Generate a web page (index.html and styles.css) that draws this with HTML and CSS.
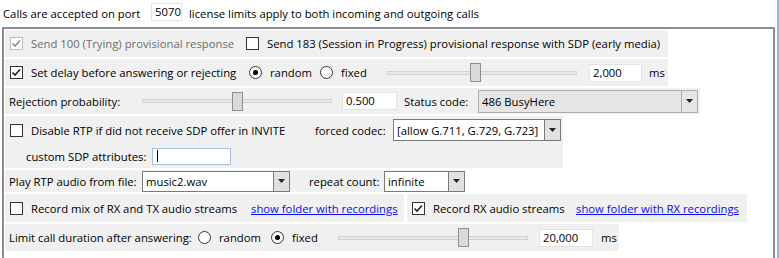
FILE: index.html
```html
<!DOCTYPE html>
<html>
<head>
<meta charset="utf-8">
<link rel="stylesheet" href="styles.css">
</head>
<body>
<div class="page">
  <div class="top">
    <span class="t-lbl1">Calls are accepted on port</span>
    <span class="portbox">5070</span>
    <span class="t-lbl2">license limits apply to both incoming and outgoing calls</span>
  </div>
  <div class="frame">
    <div class="row r1">
      <span class="cb disabled"><svg width="13" height="13" viewBox="0 0 13 13"><path d="M2.5 6.5 L5 9 L10 3.5" fill="none" stroke="#8c8c8c" stroke-width="1.6"/></svg></span>
      <span class="lbl muted w215">Send 100 (Trying) provisional response</span>
      <span class="cb nomargin"></span>
      <span class="lbl">Send 183 (Session in Progress) provisional response with SDP (early media)</span>
    </div>
    <div class="row r2">
      <span class="cb"><svg width="13" height="13" viewBox="0 0 13 13"><path d="M2.5 6.5 L5 9 L10 3.5" fill="none" stroke="#222" stroke-width="1.6"/></svg></span>
      <span class="lbl w218">Set delay before answering or rejecting</span>
      <span class="radio on"></span>
      <span class="lbl w50">random</span>
      <span class="radio"></span>
      <span class="lbl w46">fixed</span>
      <span class="slider"><span class="track"></span><span class="thumb" style="left:83px"></span></span>
      <span class="num ml12 w53">2,000</span>
      <span class="lbl ml7">ms</span>
    </div>
    <div class="row r3">
      <span class="lbl ml4 w133">Rejection probability:</span>
      <span class="slider"><span class="track"></span><span class="thumb" style="left:90px"></span></span>
      <span class="num ml10 w55">0.500</span>
      <span class="lbl ml7 w74">Status code:</span>
      <span class="dropdown w220"><span class="dd-text">486 BusyHere</span><span class="dd-btn"><svg width="7" height="4" viewBox="0 0 7 4"><path d="M0 0 H7 L3.5 4 Z" fill="#222"/></svg></span></span>
    </div>
    <div class="row r4">
      <div class="line l1">
        <span class="cb"></span>
        <span class="lbl w284">Disable RTP if did not receive SDP offer in INVITE</span>
        <span class="lbl w78">forced codec:</span>
        <span class="combo w168"><span class="cmb-text">[allow G.711, G.729, G.723]</span><span class="cmb-btn"><svg width="7" height="4" viewBox="0 0 7 4"><path d="M0 0 H7 L3.5 4 Z" fill="#222"/></svg></span></span>
      </div>
      <div class="line l2">
        <span class="lbl ml21 w126">custom SDP attributes:</span>
        <span class="textin"><span class="caret"></span></span>
      </div>
    </div>
    <div class="row r5">
      <span class="lbl ml4 w133">Play RTP audio from file:</span>
      <span class="combo w148"><span class="cmb-text">music2.wav</span><span class="cmb-btn"><svg width="7" height="4" viewBox="0 0 7 4"><path d="M0 0 H7 L3.5 4 Z" fill="#222"/></svg></span></span>
      <span class="lbl ml19 w75">repeat count:</span>
      <span class="combo w81"><span class="cmb-text">infinite</span><span class="cmb-btn"><svg width="7" height="4" viewBox="0 0 7 4"><path d="M0 0 H7 L3.5 4 Z" fill="#222"/></svg></span></span>
    </div>
    <div class="pair">
      <div class="row r6 left6">
        <span class="cb"></span>
        <span class="lbl w220">Record mix of RX and TX audio streams</span>
        <a class="link" href="#">show folder with recordings</a>
      </div>
      <div class="row r6 right6">
        <span class="cb"><svg width="13" height="13" viewBox="0 0 13 13"><path d="M2.5 6.5 L5 9 L10 3.5" fill="none" stroke="#222" stroke-width="1.6"/></svg></span>
        <span class="lbl w143">Record RX audio streams</span>
        <a class="link" href="#">show folder with RX recordings</a>
      </div>
    </div>
    <div class="row r7">
      <span class="lbl ml4 w189">Limit call duration after answering:</span>
      <span class="radio"></span>
      <span class="lbl w52">random</span>
      <span class="radio on"></span>
      <span class="lbl w46">fixed</span>
      <span class="slider"><span class="track"></span><span class="thumb" style="left:120px"></span></span>
      <span class="num ml11 w54">20,000</span>
      <span class="lbl ml8">ms</span>
    </div>
  </div>
</div>
</body>
</html>
```
FILE: styles.css
```css
html, body {
  margin: 0;
  padding: 0;
  background: #fff;
}
body {
  font-family: "Open Sans", "Noto Sans", sans-serif;
  font-size: 11.3px;
  color: #000;
}
.page {
  width: 777px;
  height: 258px;
  border-right: 2px solid #5ccbf0;
  overflow: hidden;
}
.top {
  height: 27px;
  display: flex;
  align-items: center;
  padding-left: 3px;
  box-sizing: border-box;
}
.t-lbl1 { width: 148px; white-space: nowrap; }
.t-lbl2 { margin-left: 7px; white-space: nowrap; }
.portbox {
  width: 31px;
  height: 18px;
  box-sizing: border-box;
  border: 1px solid #e3e3e3;
  padding-left: 3px;
  line-height: 16px;
  margin-top: -3px;
}
.frame {
  margin-left: 2px;
  width: 773px;
  height: 231px;
  box-sizing: border-box;
  border: 2px solid #8d8d92;
  border-bottom: none;
  padding: 1px 0 0 1px;
}
.row {
  display: flex;
  align-items: center;
  background: #f0f0f0;
  margin-bottom: 2px;
  box-sizing: border-box;
  white-space: nowrap;
}
.r1 { width: 663px; height: 27px; }
.r2 { width: 663px; height: 27px; }
.r3 { width: 695px; height: 26px; }
.r4 { width: 558px; height: 52px; flex-direction: column; align-items: stretch; }
.r5 { width: 460px; height: 22px; }
.pair { display: flex; gap: 3px; margin-bottom: 2px; }
.pair .row { margin-bottom: 0; }
.r6 { height: 28px; }
.left6 { width: 399px; }
.right6 { width: 340px; }
.r7 { width: 614px; height: 27px; }

.line { display: flex; align-items: center; }
.l1 { height: 28px; }
.l2 { height: 24px; }

.lbl { display: inline-block; }
.muted { color: #6d6d6d; }

.cb {
  width: 13px;
  height: 13px;
  box-sizing: border-box;
  border: 1px solid #333;
  background: #fff;
  margin-left: 5px;
  margin-right: 8px;
  display: inline-flex;
  align-items: center;
  justify-content: center;
  flex: none;
}
.cb svg { display: block; margin: -1px; }
.cb.disabled { border-color: #bcbcbc; }
.cb.nomargin { margin-left: 0; }

.radio {
  width: 13px;
  height: 13px;
  box-sizing: border-box;
  border: 1px solid #333;
  border-radius: 50%;
  background: #fff;
  margin-right: 8px;
  display: inline-flex;
  align-items: center;
  justify-content: center;
  flex: none;
}
.radio.on::after {
  content: "";
  width: 5px;
  height: 5px;
  border-radius: 50%;
  background: #000;
}

.slider {
  position: relative;
  width: 190px;
  height: 19px;
  flex: none;
  display: flex;
  align-items: center;
}
.track {
  width: 190px;
  height: 4px;
  box-sizing: border-box;
  background: #e7eaea;
  border: 1px solid #d2d2d2;
}
.thumb {
  position: absolute;
  top: 0;
  width: 11px;
  height: 19px;
  box-sizing: border-box;
  background: #d9d9d9;
  border: 1px solid #8f8f8f;
}

.num {
  height: 18px;
  box-sizing: border-box;
  background: #fff;
  border: 1px solid #e3e3e3;
  padding-left: 3px;
  line-height: 16px;
  flex: none;
}

.dropdown {
  height: 23px;
  box-sizing: border-box;
  background: #e5e5e5;
  border: 1px solid #acacac;
  display: flex;
  align-items: center;
  flex: none;
}
.dd-text { flex: 1; padding-left: 3px; }
.dd-btn {
  width: 15px;
  height: 100%;
  border-left: 1px solid #acacac;
  display: flex;
  align-items: center;
  justify-content: center;
}

.combo {
  height: 22px;
  box-sizing: border-box;
  background: #fff;
  border: 1px solid #7a7a7a;
  display: flex;
  align-items: center;
  flex: none;
}
.r5 .combo { height: 21px; }
.cmb-text { flex: 1; padding-left: 3px; overflow: hidden; }
.cmb-btn {
  width: 15px;
  height: 100%;
  background: #e1e1e1;
  border-left: 1px solid #7a7a7a;
  display: flex;
  align-items: center;
  justify-content: center;
}

.textin {
  width: 79px;
  height: 17px;
  box-sizing: border-box;
  background: #fff;
  border: 1px solid #a9c1de;
  display: flex;
  align-items: center;
  padding-left: 4px;
}
.caret { width: 1px; height: 12px; background: #000; }

.link {
  color: #0a0aff;
  text-decoration: underline;
}

.ml4 { margin-left: 4px; }
.ml7 { margin-left: 7px; }
.ml8 { margin-left: 8px; }
.ml10 { margin-left: 10px; }
.ml11 { margin-left: 11px; }
.ml12 { margin-left: 12px; }
.ml19 { margin-left: 19px; }
.ml21 { margin-left: 21px; }
.w46 { width: 46px; }
.w50 { width: 50px; }
.w52 { width: 52px; }
.w53 { width: 53px; }
.w54 { width: 54px; }
.w55 { width: 55px; }
.w74 { width: 74px; }
.w75 { width: 75px; }
.w78 { width: 78px; }
.w81 { width: 81px; }
.w126 { width: 126px; }
.w133 { width: 133px; }
.w143 { width: 143px; }
.w148 { width: 148px; }
.w168 { width: 168px; }
.w189 { width: 189px; }
.w215 { width: 215px; }
.w218 { width: 218px; }
.w220 { width: 220px; }
.w284 { width: 284px; }
```
